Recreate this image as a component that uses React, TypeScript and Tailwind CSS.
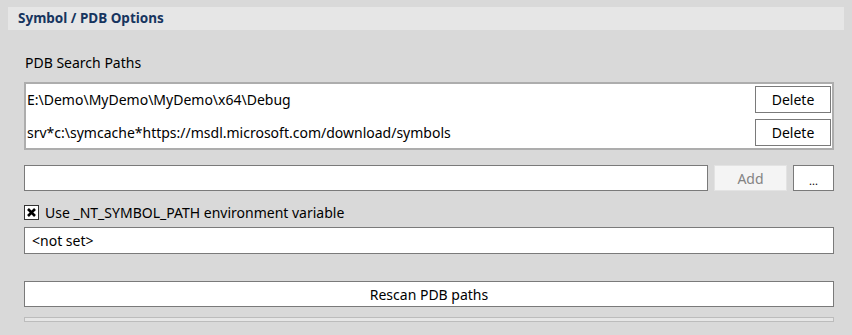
import { useState } from "react";

const paths = [
  "E:\\Demo\\MyDemo\\MyDemo\\x64\\Debug",
  "srv*c:\\symcache*https://msdl.microsoft.com/download/symbols",
];

export default function App() {
  const [useEnv, setUseEnv] = useState(true);

  return (
    <div
      className="w-[852px] h-[335px] bg-[#d9d9d9] text-[14px] text-black overflow-hidden"
      style={{ fontFamily: '"Noto Sans", "Open Sans", sans-serif' }}
    >
      {/* section header */}
      <div className="mx-2 mt-[7px] h-[23px] bg-[#e6e6e6] flex items-center pl-[10px]">
        <span className="text-[13.5px] font-bold text-[#17355f]">
          Symbol / PDB Options
        </span>
      </div>

      <div className="pl-6 pr-[18px]">
        <div className="mt-[23px] h-5 leading-5 pl-px">PDB Search Paths</div>

        {/* search path list */}
        <div className="mt-[9px] h-[68px] border-2 border-[#adadad] bg-white pt-[2px] pr-px flex flex-col gap-[6px]">
          {paths.map((p) => (
            <div key={p} className="h-[27px] flex items-center justify-between">
              <span className="pl-px">{p}</span>
              <button className="w-[76px] h-[27px] border border-[#7a7a7a] bg-white">
                Delete
              </button>
            </div>
          ))}
        </div>

        {/* add path row */}
        <div className="mt-[15px] h-[26px] flex gap-[6px]">
          <input className="flex-1 h-full border border-[#7a7a7a] bg-white px-2 outline-none" />
          <button className="w-[73px] h-full border border-[#e3e3e3] bg-[#f4f4f4] text-[#838383]">
            Add
          </button>
          <button className="w-[41px] h-full border border-[#7a7a7a] bg-white text-[11px] leading-none pt-1">
            ...
          </button>
        </div>

        {/* env var checkbox */}
        <label className="mt-[10px] h-[22px] flex items-center gap-[6px] cursor-pointer">
          <span
            onClick={() => setUseEnv(!useEnv)}
            className="w-[15px] h-[15px] border border-[#333] bg-white flex items-center justify-center"
          >
            {useEnv && (
              <svg width="9" height="9" viewBox="0 0 9 9">
                <path d="M1 1L8 8M8 1L1 8" stroke="#000" strokeWidth="2.6" />
              </svg>
            )}
          </span>
          <span>Use _NT_SYMBOL_PATH environment variable</span>
        </label>

        <div className="mt-1 h-[27px] border border-[#7a7a7a] bg-white flex items-center pl-[7px]">
          &lt;not set&gt;
        </div>

        <button className="mt-[27px] w-full h-[26px] border border-[#7a7a7a] bg-white">
          Rescan PDB paths
        </button>

        {/* progress bar */}
        <div className="mt-[10px] h-[5px] border border-[#bcbcbc] bg-[#e6e6e6]" />
      </div>
    </div>
  );
}
